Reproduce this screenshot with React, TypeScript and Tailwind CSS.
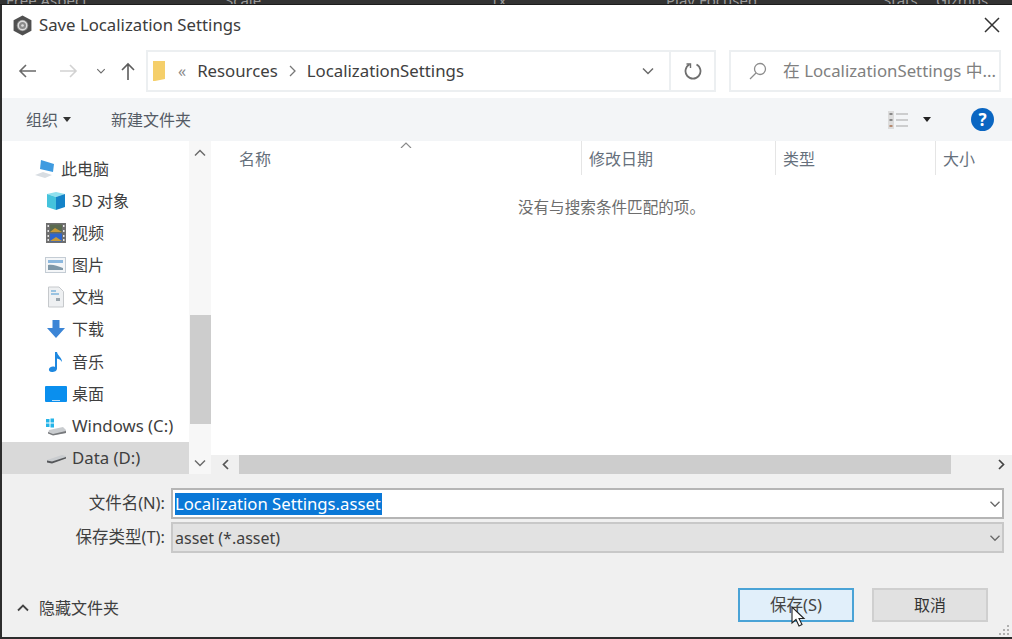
import React from "react";

const font = { fontFamily: '"Noto Sans","Noto Sans CJK SC",sans-serif' };

function Row({ icon, label, pl = "pl-[42px]", selected = false, tall = false, latin = false }: { icon: React.ReactNode; label: string; pl?: string; selected?: boolean; tall?: boolean; latin?: boolean }) {
  return (
    <div className={`${tall ? "h-[33px] pb-[1px]" : "h-[32px]"} flex items-center ${pl} ${selected ? "bg-[#d9d9d9]" : ""}`}>
      <div className="w-[24px] h-[24px] flex items-center justify-center shrink-0">{icon}</div>
      <span className={`ml-[4px] ${latin ? "text-[16.800px]" : "text-[16px]"} text-[#3f3f3f] whitespace-nowrap`}>{label}</span>
    </div>
  );
}

const Chevron = ({ cls = "" }: { cls?: string }) => (
  <svg width="12" height="8" viewBox="0 0 12 8" className={cls} fill="none" stroke="#6b6b6b" strokeWidth="1.5">
    <path d="M1 1.5 L6 6.5 L11 1.5" />
  </svg>
);

const PC = () => (
  <svg width="24" height="24" viewBox="0 0 24 24">
    <path d="M8 3 L21 7 L20 15 L7 12 Z" fill="#3f9be0" />
    <path d="M2 18 L10 15 L19 18 L12 21 Z" fill="#d8dde2" />
  </svg>
);
const Cube = () => (
  <svg width="22" height="22" viewBox="0 0 22 22">
    <path d="M2 4 L11 2 L20 4 L11 7 Z" fill="#8fe0ee" />
    <path d="M2 4 L11 7 V20 L2 17 Z" fill="#45c3dc" />
    <path d="M11 7 L20 4 V17 L11 20 Z" fill="#1483c8" />
  </svg>
);
const Film = () => (
  <svg width="20" height="22" viewBox="0 0 20 22">
    <rect x="0" y="1" width="20" height="20" fill="#6f6f6f" />
    <rect x="4" y="2.5" width="12" height="8" fill="#5a6a50" />
    <rect x="4" y="11.5" width="12" height="8" fill="#2f66cc" />
    <path d="M4 10 L9 6 L16 10 Z" fill="#c89a38" />
    <path d="M4 19 L10 15 L16 19 Z" fill="#c89a38" />
    <path d="M1.5 3h1.5v2h-1.5zM1.5 8h1.5v2h-1.5zM1.5 13h1.5v2h-1.5zM1.5 17h1.5v2h-1.5zM17 3h1.5v2H17zM17 8h1.5v2H17zM17 13h1.5v2H17zM17 17h1.5v2H17z" fill="#e5e5e5" />
  </svg>
);
const Pic = () => (
  <svg width="22" height="18" viewBox="0 0 22 18">
    <rect x="0.5" y="1.5" width="20" height="15" fill="#f4f6f8" stroke="#c4ccd4" />
    <rect x="3" y="4" width="15" height="3" fill="#8cb8de" />
    <path d="M3 13 V9 C8 8 12 10 18 12 V14 H3 Z" fill="#7f98a8" />
  </svg>
);
const Doc = () => (
  <svg width="18" height="22" viewBox="0 0 18 22">
    <path d="M1.5 1 H12 L16.5 5.5 V21 H1.5 Z" fill="#eef0f2" stroke="#c6c9cc" />
    <path d="M4 5h5M4 8h8" stroke="#7fb4dc" strokeWidth="1.5" />
    <rect x="9" y="12" width="4" height="3" fill="#9aa5ad" />
  </svg>
);
const Down = () => (
  <svg width="20" height="20" viewBox="0 0 20 20">
    <path d="M6.5 1 H13.5 V9 H19 L10 19 L1 9 H6.5 Z" fill="#3b85d6" />
  </svg>
);
const Music = () => (
  <svg width="16" height="22" viewBox="0 0 16 22">
    <path d="M7 1 H9 C9.5 5 14 6 14 11 C12.5 8.5 11 8 9 7.5 V17.5 C9 20 6.5 21 4 21 C1.5 21 0.5 19.5 1 18 C1.5 16 4.5 15 7 16 Z" fill="#1e88e0" />
  </svg>
);
const Desk = () => (
  <svg width="22" height="16" viewBox="0 0 22 16">
    <rect x="0" y="0" width="22" height="16" rx="1" fill="#0a8fee" />
    <rect x="7" y="14" width="8" height="1" fill="#bfe0f8" />
  </svg>
);
const WinDrive = () => (
  <svg width="22" height="20" viewBox="0 0 22 20">
    <path d="M4 14 L18 11 L21 14 V17 L8 19 L3 17 Z" fill="#c9cccf" />
    <path d="M3 16 L8 18 L21 15 V17 L8 19.5 L3 17.5 Z" fill="#77797c" />
    <path d="M1 3h3.5v3.5H1zM5.5 2.500h3.500v4H5.500zM1 7.500h3.500V11H1zM5.500 7.500h3.500v4H5.500z" fill="#25b4e8" />
  </svg>
);
const Drive = () => (
  <svg width="22" height="12" viewBox="0 0 22 12">
    <path d="M2 8 L17 3 L21 4 V6 L7 11 L2 10 Z" fill="#c9cccf" />
    <path d="M2 8.500 L7 9.500 L21 5 V6.500 L7 11.500 L2 10.500 Z" fill="#55575a" />
  </svg>
);

function Unity() {
  return (
    <svg width="21" height="21" viewBox="0 0 20 20">
      <path d="M10 0.500 L18.500 5 V15 L10 19.500 L1.500 15 V5 Z" fill="#505050" />
      <circle cx="10" cy="10" r="5.500" fill="#8c8c8c" />
      <circle cx="10" cy="10" r="4" fill="none" stroke="#dedede" strokeWidth="1.300" />
      <circle cx="10" cy="10" r="1.300" fill="#dedede" />
    </svg>
  );
}

export default function App() {
  return (
    <div className="w-[1012px] h-[639px] overflow-hidden bg-[#2d2d2d] flex flex-col" style={font}>
      <div className="h-[5px] shrink-0 overflow-hidden flex items-end text-[15px] leading-[8px] text-[#9a9a9a] bg-[#333333] border-b border-[#1c1c1c]">
        <span className="ml-[6px] w-[219px]">Free Aspect</span>
        <span className="w-[265px]">Scale</span>
        <span className="w-[176px]">1x</span>
        <span className="w-[217px]">Play Focused</span>
        <span className="w-[53px]">Stats</span>
        <span>Gizmos</span>
      </div>

      <div className="flex-1 min-h-0 ml-[2px] mb-[2px] bg-white flex flex-col">
        {/* title bar */}
        <div className="h-[40px] shrink-0 flex items-center pl-[10px] pr-[12px]">
          <Unity />
          <span className="ml-[6px] text-[16.750px] text-[#3c3c3c]">Save Localization Settings</span>
          <svg className="ml-auto" width="16" height="16" viewBox="0 0 16 16" fill="none" stroke="#333" strokeWidth="1.500">
            <path d="M1 1 L15 15 M15 1 L1 15" />
          </svg>
        </div>

        {/* nav row */}
        <div className="h-[53px] shrink-0 flex items-start pt-[5px]">
          <div className="w-[144px] h-[42px] flex items-center shrink-0">
            <svg className="ml-[16px]" width="18" height="14" viewBox="0 0 18 14" fill="none" stroke="#6a6a6a" strokeWidth="1.600">
              <path d="M18 7 H2 M8 1 L2 7 L8 13" />
            </svg>
            <svg className="ml-[24px]" width="18" height="14" viewBox="0 0 18 14" fill="none" stroke="#d2d2d2" strokeWidth="1.600">
              <path d="M0 7 H16 M10 1 L16 7 L10 13" />
            </svg>
            <Chevron cls="ml-[17px] scale-75" />
            <svg className="ml-[14px]" width="14" height="18" viewBox="0 0 14 18" fill="none" stroke="#5c5c5c" strokeWidth="1.600">
              <path d="M7 18 V2 M1 8 L7 2 L13 8" />
            </svg>
          </div>
          <div className="w-[570px] h-[42px] border-2 border-[#eceff1] flex items-center shrink-0">
            <svg className="ml-[5px]" width="14" height="20" viewBox="0 0 14 20">
              <path d="M0 0 H12 V18 L2 20 H0 Z" fill="#f5cf6a" />
            </svg>
            <span className="ml-[11px] text-[16px] text-[#8a8a8a]">«</span>
            <span className="ml-[11px] text-[16.800px] text-[#404040]">Resources</span>
            <svg className="ml-[11px]" width="8" height="12" viewBox="0 0 8 12" fill="none" stroke="#777" strokeWidth="1.300">
              <path d="M1 1 L6 6 L1 11" />
            </svg>
            <span className="ml-[10px] text-[16.800px] text-[#404040]">LocalizationSettings</span>
            <Chevron cls="ml-auto mr-[15px]" />
            <div className="w-[45px] h-full border-l-2 border-[#eceff1] flex items-center justify-center">
              <svg width="18" height="18" viewBox="0 0 18 18" fill="none" stroke="#6f6f6f" strokeWidth="1.800">
                <path d="M5.500 2.500 A7.500 7.500 0 1 0 12.500 2.500" />
                <path d="M2.500 2 H6.500 V6" strokeWidth="1.400" />
              </svg>
            </div>
          </div>
          <div className="ml-[13px] w-[272px] h-[42px] border-2 border-[#eceff1] flex items-center shrink-0">
            <svg className="ml-[18px]" width="18" height="18" viewBox="0 0 18 18" fill="none" stroke="#8c8c8c" strokeWidth="1.300">
              <circle cx="11" cy="7" r="5.500" />
              <path d="M7 11 L1 17" />
            </svg>
            <span className="ml-[16px] text-[16.800px] text-[#808080] whitespace-nowrap">在 LocalizationSettings 中...</span>
          </div>
        </div>

        {/* toolbar */}
        <div className="h-[43px] shrink-0 bg-[#f3f5f7] flex items-center pl-[24px] text-[16px] text-[#555c66]">
          <span className="mt-[1px]">组织</span>
          <svg className="ml-[5px]" width="8" height="5" viewBox="0 0 8 5"><path d="M0 0 H8 L4 5 Z" fill="#333" /></svg>
          <span className="ml-[40px] mt-[1px]">新建文件夹</span>
          <svg className="ml-auto" width="20" height="18" viewBox="0 0 20 18">
            <rect x="0" y="0" width="6" height="18" fill="#dcdcdc" />
            <path d="M1.500 2h3v2h-3z" fill="#888" /><path d="M1.500 8h3v2h-3z" fill="#888" /><path d="M1.500 14h3v2h-3z" fill="#b58a70" />
            <path d="M8 3 H20 M8 9 H20 M8 15 H20" stroke="#a5a5a5" strokeWidth="1.200" />
          </svg>
          <svg className="ml-[15px]" width="8" height="5" viewBox="0 0 8 5"><path d="M0 0 H8 L4 5 Z" fill="#222" /></svg>
          <div className="ml-[40px] mr-[18px] w-[23px] h-[23px] rounded-full bg-[#0a66c2] text-white flex items-center justify-center text-[17px] font-bold">?</div>
        </div>

        {/* main */}
        <div className="h-[333px] shrink-0 flex">
          <div className="w-[187px] shrink-0 flex flex-col justify-end">
            <Row icon={<PC />} label="此电脑" pl="pl-[31px]" />
            <Row icon={<Cube />} label="3D 对象" />
            <Row icon={<Film />} label="视频" />
            <Row icon={<Pic />} label="图片" />
            <Row icon={<Doc />} label="文档" />
            <Row icon={<Down />} label="下载" tall />
            <Row icon={<Music />} label="音乐" />
            <Row icon={<Desk />} label="桌面" />
            <Row icon={<WinDrive />} label="Windows (C:)" latin />
            <Row icon={<Drive />} label="Data (D:)" selected latin />
          </div>
          <div className="w-[22px] shrink-0 bg-[#f7f7f7] flex flex-col items-center justify-between pt-[8px] pb-[7px] relative">
            <Chevron cls="rotate-180" />
            <Chevron />
            <div className="absolute left-[1px] right-0 top-[174px] h-[109px] bg-[#cdcdcd]" />
          </div>
          <div className="flex-1 min-w-0 flex flex-col">
            <div className="h-[34px] shrink-0 flex text-[16px] text-[#66707c] relative">
              <div className="w-[370px] pl-[28px] pt-[2px] flex items-center">名称</div>
              <svg className="absolute left-[189px] top-[1px]" width="12" height="6" viewBox="0 0 12 6" fill="none" stroke="#8a8a8a" strokeWidth="1.200"><path d="M1 6 L6 1 L11 6" /></svg>
              <div className="w-[194px] pl-[7px] pt-[2px] flex items-center border-l border-[#e5e5e5]">修改日期</div>
              <div className="w-[160px] pl-[7px] pt-[2px] flex items-center border-l border-[#e5e5e5]">类型</div>
              <div className="flex-1 pl-[7px] pt-[2px] flex items-center border-l border-[#e5e5e5]">大小</div>
            </div>
            <div className="flex-1 min-h-0 flex justify-center pt-[20px] text-[15.600px] text-[#6d6d6d]">
              <span className="leading-[24px]">没有与搜索条件匹配的项。</span>
            </div>
            <div className="h-[19px] shrink-0 bg-[#f0f0f0] flex items-center">
              <div className="w-[28px] flex justify-center"><svg width="7" height="11" viewBox="0 0 7 11" fill="none" stroke="#555" strokeWidth="1.700"><path d="M6 1 L1.500 5.500 L6 10" /></svg></div>
              <div className="w-[712px] h-full bg-[#cdcdcd]" />
              <div className="ml-auto mr-[7px]"><svg width="7" height="11" viewBox="0 0 7 11" fill="none" stroke="#444" strokeWidth="1.700"><path d="M1 1 L5.500 5.500 L1 10" /></svg></div>
            </div>
          </div>
        </div>

        {/* bottom */}
        <div className="flex-1 min-h-0 bg-[#f0f0f0] relative text-[#3f3f3f]">
          <div className="pt-[14px] pl-[72px] pr-[8px] flex flex-col gap-[3px]">
            <div className="flex items-center h-[31px]">
              <span className="w-[91px] text-right text-[16.500px] whitespace-nowrap">文件名(N):</span>
              <div className="ml-[6px] flex-1 h-[31px] bg-white border-2 border-[#b5b5b5] flex items-center pl-[2px]">
                <span className="bg-[#0a78d7] text-white text-[16.700px] leading-[22px] pr-[1px]">Localization Settings.asset</span>
                <Chevron cls="ml-auto mr-[1px] scale-90" />
              </div>
            </div>
            <div className="flex items-center h-[31px]">
              <span className="w-[91px] text-right text-[16.500px] whitespace-nowrap">保存类型(T):</span>
              <div className="ml-[6px] flex-1 h-[31px] bg-[#e2e2e2] border-2 border-[#c8c8c8] flex items-center pl-[2px]">
                <span className="text-[16px]">asset (*.asset)</span>
                <Chevron cls="ml-auto mr-[1px] scale-90" />
              </div>
            </div>
          </div>
          <div className="flex items-center mt-[35px]">
            <div className="flex items-center pl-[15px] mt-[5px]">
              <svg width="12" height="8" viewBox="0 0 12 8" fill="none" stroke="#444" strokeWidth="1.800"><path d="M1 6.500 L6 1.500 L11 6.500" /></svg>
              <span className="ml-[10px] text-[16px]">隐藏文件夹</span>
            </div>
            <div className="ml-auto flex gap-[18px] mr-[24px]">
              <div className="w-[116px] h-[34px] bg-[#e1effa] border-2 border-[#4aa3d6] flex items-center justify-center text-[16.500px] text-[#454545]">保存(S)</div>
              <div className="w-[116px] h-[34px] bg-[#e1e1e1] border-2 border-[#cfcfcf] flex items-center justify-center text-[16px] text-[#333]">取消</div>
            </div>
          </div>
          {/* cursor */}
          <svg className="absolute left-[788px] top-[132px]" width="16" height="22" viewBox="0 0 16 22">
            <path d="M2 1 V17 L6 13.500 L9 20 L12 18.500 L9 12.500 H14 Z" fill="#fff" stroke="#222" strokeWidth="1.100" />
          </svg>
          {/* grip */}
          <svg className="absolute right-[2px] bottom-[1px]" width="12" height="12" viewBox="0 0 12 12" fill="#b0b0b0">
            <rect x="9" y="1" width="2" height="2" /><rect x="5" y="5" width="2" height="2" /><rect x="9" y="5" width="2" height="2" /><rect x="1" y="9" width="2" height="2" /><rect x="5" y="9" width="2" height="2" /><rect x="9" y="9" width="2" height="2" />
          </svg>
        </div>
      </div>
    </div>
  );
}
